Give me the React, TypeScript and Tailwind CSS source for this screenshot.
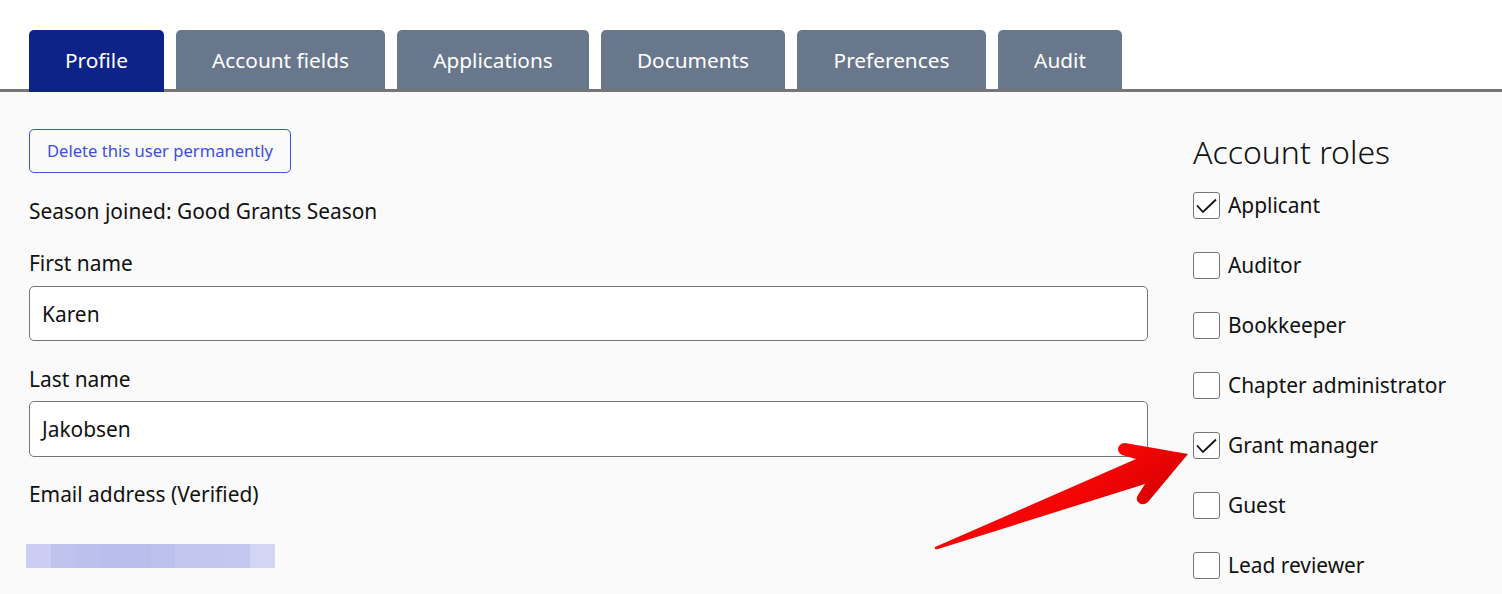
const tabs: [string, string][] = [
  ["Profile", "w-[135px]"],
  ["Account fields", "w-[209px]"],
  ["Applications", "w-[192px]"],
  ["Documents", "w-[184px]"],
  ["Preferences", "w-[189px]"],
  ["Audit", "w-[124px]"],
];
const roles: [string, boolean][] = [
  ["Applicant", true],
  ["Auditor", false],
  ["Bookkeeper", false],
  ["Chapter administrator", false],
  ["Grant manager", true],
  ["Guest", false],
  ["Lead reviewer", false],
];
const blur = ["#cbcdf2", "#bfc3ee", "#bcc0ed", "#babeec", "#babeec", "#bdc1ed", "#c3c7f0", "#c2c6ef", "#c4c7ef", "#d3d5f5"];

function Field({ label, value, h, gap }: { label: string; value: string; h: string; gap: string }) {
  return (
    <div>
      <div className="text-[20.9px] leading-[28px] text-[#111]">{label}</div>
      <div className={`flex items-center rounded-[5px] border border-[#757575] bg-white pl-[12px] pt-[2px] text-[20.9px] text-[#111] ${gap} ${h}`}>{value}</div>
    </div>
  );
}

export default function App() {
  return (
    <div className="relative h-[594px] w-[1502px] overflow-hidden bg-white font-['Noto_Sans','Open_Sans',sans-serif]">
      <div className="flex h-[92px] gap-[12px] border-b-[3px] border-[#757575] pl-[29px] pt-[30px]">
        {tabs.map(([t, w], i) => (
          <div
            key={t}
            className={
              i === 0
                ? `z-10 flex h-[62px] items-center justify-center rounded-t-[5px] bg-[#0d2388] pb-[1px] text-[20.8px] text-white ${w}`
                : `flex h-[59px] items-center justify-center rounded-t-[5px] bg-[#69778c] pt-[2px] text-[20.8px] text-white ${w}`
            }
          >
            {t}
          </div>
        ))}
      </div>
      <div className="flex h-[502px] bg-[#fafafa] pl-[29px]">
        <div className="w-[1119px] pt-[37px]">
          <div className="flex h-[44px] w-[262px] items-center justify-center rounded-[5px] border border-[#4152e0] text-[16.6px] text-[#3d4ee0]">
            Delete this user permanently
          </div>
          <div className="mt-[24px] text-[20.9px] leading-[28px] text-[#111]">Season joined: Good Grants Season</div>
          <div className="mt-[24px]">
            <Field label="First name" value="Karen" h="h-[55px]" gap="mt-[9px]" />
          </div>
          <div className="mt-[24px]">
            <Field label="Last name" value="Jakobsen" h="h-[56px]" gap="mt-[8px]" />
          </div>
          <div className="mt-[23px] text-[20.9px] leading-[28px] text-[#111]">Email address (Verified)</div>
          <div className="ml-[-3px] mt-[36px] flex h-[24px] w-[249px]">
            {blur.map((c, i) => (
              <div key={i} className="h-full flex-1" style={{ backgroundColor: c }} />
            ))}
          </div>
        </div>
        <div className="ml-[45px] pt-[38px]">
          <div className="text-[32px] font-light leading-[44px] text-[#111]">Account roles</div>
          <div className="mt-[18px] flex flex-col gap-[33px]">
            {roles.map(([r, on]) => (
              <div key={r} className="flex h-[27px] items-center gap-[8px]">
                <div className="flex h-[27px] w-[27px] items-center justify-center rounded-[3px] border border-[#757575] bg-white">
                  {on && (
                    <svg width="21" height="16" viewBox="0 0 21 16" fill="none">
                      <path d="M1 7.5 L7 14 L20 1.5" stroke="#111" strokeWidth="1.8" />
                    </svg>
                  )}
                </div>
                <span className="text-[20.9px] text-[#111]">{r}</span>
              </div>
            ))}
          </div>
        </div>
      </div>
      <svg className="absolute left-0 top-0" width="1502" height="594" viewBox="0 0 1502 594">
        <defs>
          <linearGradient id="arrow" x1="1130" y1="450" x2="1170" y2="500" gradientUnits="userSpaceOnUse">
            <stop offset="0" stopColor="#f50505" />
            <stop offset="1" stopColor="#d60000" />
          </linearGradient>
        </defs>
        <path
          d="M935 547 L1136 459 L1122 455 Q1116 451 1119 446 Q1121 443 1125 443 L1188 454 L1148 502 Q1143 506 1139 503 Q1135 500 1138 495 L1145 484 L938 549 Q934 550 935 547 Z"
          fill="url(#arrow)"
        />
      </svg>
    </div>
  );
}
